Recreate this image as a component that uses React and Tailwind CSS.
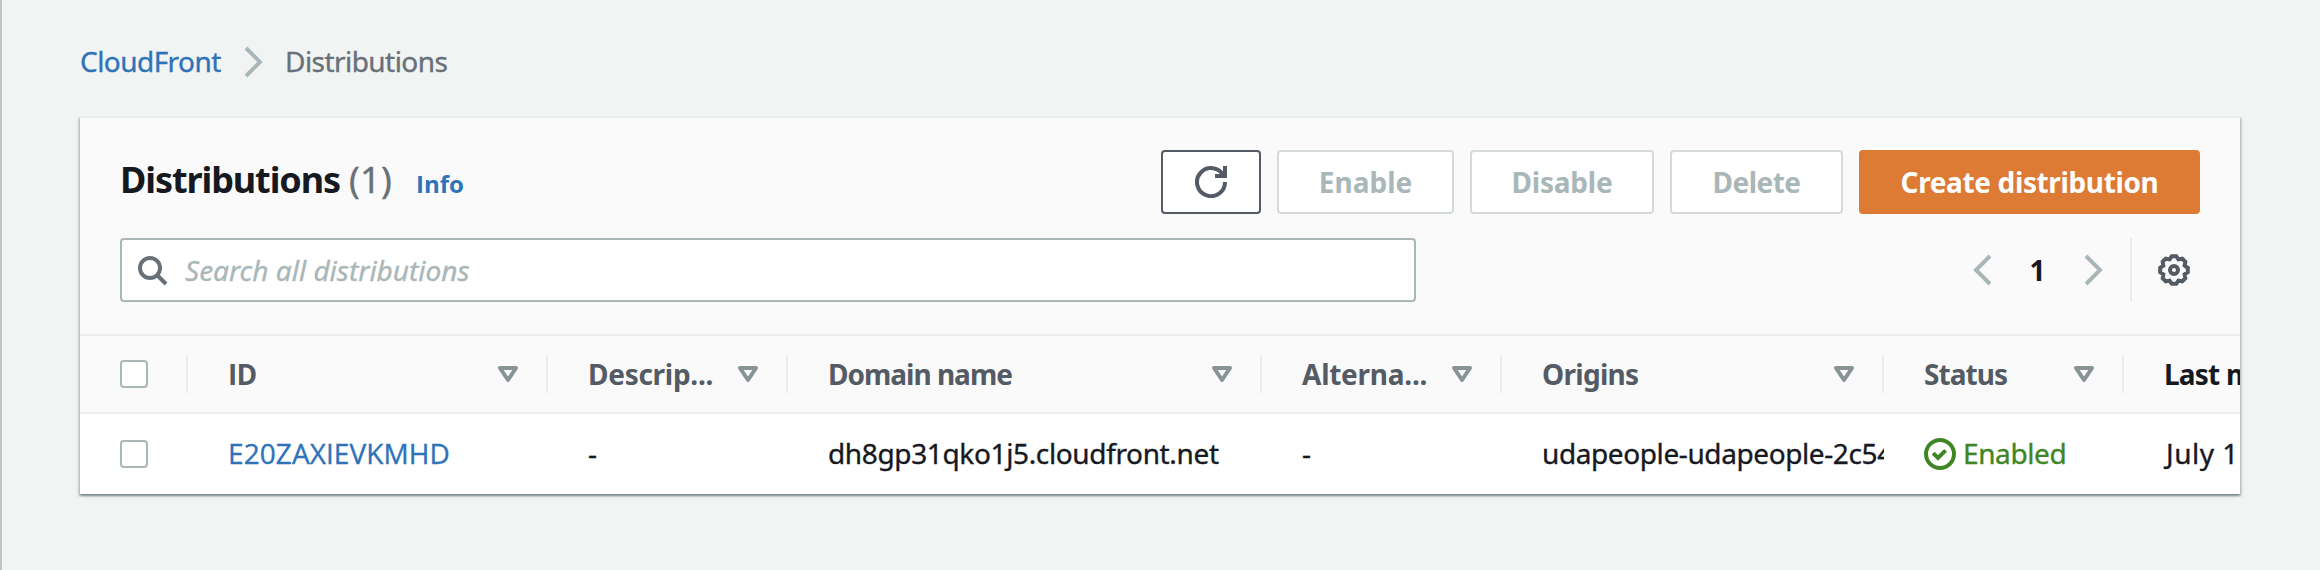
import React from 'react';

function Icon({ className = '', children }) {
  return (
    <svg viewBox="0 0 16 16" fill="none" stroke="currentColor" strokeWidth="2" className={`size-8 shrink-0 ${className}`}>
      {children}
    </svg>
  );
}

function gearPath() {
  const points = [];
  for (let i = 0; i < 8; i++) {
    const spots = [[-9, 7], [9, 7], [22.5, 5.75]];
    for (const [offset, r] of spots) {
      const a = ((i * 45 + offset - 90) * Math.PI) / 180;
      points.push(`${(8 + r * Math.cos(a)).toFixed(2)} ${(8 + r * Math.sin(a)).toFixed(2)}`);
    }
  }
  return `M${points.join('L')}Z`;
}

const ChevronRight = () => <Icon className="text-[#aab7b8]"><path d="m4 1 7 7-7 7" /></Icon>;
const ChevronLeft = () => <Icon className="text-[#aab7b8]"><path d="m11 1-7 7 7 7" /></Icon>;

function Button({ className, children }) {
  return (
    <button className={`flex h-16 items-center justify-center rounded border-2 border-[#d5dbdb] bg-white pb-px font-bold text-[#aab7b8] ${className}`}>
      {children}
    </button>
  );
}

function HeaderCell({ width, text, children }) {
  return (
    <div className={`flex h-[38px] shrink-0 items-center justify-between border-r-2 border-[#eaeded] pl-10 pr-[22px] font-bold text-[#545b64] ${width}`}>
      <span className={`pb-px whitespace-nowrap ${text}`}>{children}</span>
      <Icon className="text-[#879596]"><path d="M4 5h8l-4 6z" strokeLinejoin="round" /></Icon>
    </div>
  );
}

function Cell({ width, children }) {
  return <div className={`flex shrink-0 items-center overflow-hidden whitespace-nowrap pl-10 pb-[2px] [-webkit-text-stroke:0.35px] ${width}`}>{children}</div>;
}

const Checkbox = () => <span className="block h-7 w-7 rounded border-2 border-[#aab7b8] bg-white" />;

export default function App() {
  return (
    <div className="h-[570px] w-[2320px] overflow-hidden border-l-2 border-[#bfc4c8] bg-[#f2f3f3] pl-[78px] pt-10 font-['Noto_Sans',sans-serif] text-[28px] leading-[44px] text-[#16191f]">
      <nav className="flex h-11 items-center [-webkit-text-stroke:0.35px]">
        <a className="w-[158px] pb-[2px] tracking-[-0.55px] text-[#2e73b8]">CloudFront</a>
        <ChevronRight />
        <span className="pb-[2px] pl-[15px] tracking-[-0.55px] text-[#687078]">Distributions</span>
      </nav>

      <main className="mt-8 w-[2160px] border-t-2 border-[#eaeded] bg-white shadow-[0_2px_2px_0_rgba(0,28,36,0.3),2px_2px_2px_0_rgba(0,28,36,0.15),-2px_2px_2px_0_rgba(0,28,36,0.15)]">
        <header className="flex h-[216px] flex-col gap-6 bg-[#fafafa] px-10 pt-8">
          <div className="flex h-16 items-center justify-between">
            <h1 className="flex items-baseline pb-[4px] text-[36px]">
              <span className="w-[229px] font-bold tracking-[-1.09px]">Distributions</span>
              <span className="w-[67px] tracking-[0.3px] text-[#687078] [-webkit-text-stroke:0.35px]">(1)</span>
              <a className="font-['Open_Sans',sans-serif] text-2xl font-bold text-[#2e73b8]">Info</a>
            </h1>
            <div className="flex gap-4">
              <Button className="w-[100px] border-[#545b64]! pb-0! text-[#545b64]!">
                <Icon>
                  <path d="M10 5h5V0" />
                  <path d="M15 8a7 7 0 1 1-.7-3" />
                </Icon>
              </Button>
              <Button className="w-[177px]">Enable</Button>
              <Button className="w-[184px] tracking-[-0.2px]">Disable</Button>
              <Button className="w-[173px] tracking-[-0.5px]">Delete</Button>
              <Button className="w-[341px] border-[#dd7a33]! bg-[#dd7a33]! tracking-[-0.37px] text-white!">Create distribution</Button>
            </div>
          </div>
          <div className="flex h-16 items-center justify-between">
            <div className="flex h-16 w-[1296px] items-center rounded border-2 border-[#aab7b8] bg-white pl-[14px]">
              <Icon className="text-[#687078]">
                <circle cx="7" cy="7" r="5" />
                <path d="m15 15-4.5-4.5" />
              </Icon>
              <span className="pl-[17px] italic text-[#aab7b8] [-webkit-text-stroke:0.35px]">Search all distributions</span>
            </div>
            <div className="flex h-16 items-center">
              <ChevronLeft />
              <span className="w-[78px] pb-px pr-[3px] text-center font-bold">1</span>
              <ChevronRight />
              <span className="ml-5 h-16 w-[2px] bg-[#eaeded]" />
              <Icon className="ml-[26px] mr-[10px] text-[#545b64]">
                <path d={gearPath()} />
                <circle cx="8" cy="8" r="2" />
              </Icon>
            </div>
          </div>
        </header>

        <section className="overflow-hidden">
          <div className="flex h-20 items-center overflow-hidden border-y-2 border-[#eaeded] bg-[#fafafa]">
            <div className="flex h-[38px] w-[108px] shrink-0 items-center border-r-2 border-[#eaeded] pl-10">
              <Checkbox />
            </div>
            <HeaderCell width="w-[360px]" text="font-['Open_Sans',sans-serif] tracking-[-0.8px]">ID</HeaderCell>
            <HeaderCell width="w-[240px]" text="tracking-[-0.28px]">Descrip...</HeaderCell>
            <HeaderCell width="w-[474px]" text="tracking-[-1px]">Domain name</HeaderCell>
            <HeaderCell width="w-[240px]" text="tracking-[-0.25px]">Alterna...</HeaderCell>
            <HeaderCell width="w-[382px]" text="tracking-[-0.7px]">Origins</HeaderCell>
            <HeaderCell width="w-[240px]" text="tracking-[-0.95px]">Status</HeaderCell>
            <div className="shrink-0 whitespace-nowrap pb-px pl-10 font-bold tracking-[-0.8px]">Last modified</div>
          </div>
          <div className="flex h-20 items-center overflow-hidden">
            <div className="w-[108px] shrink-0 pl-10"><Checkbox /></div>
            <Cell width="w-[360px]"><a className="font-['Open_Sans',sans-serif] tracking-[0.08px] text-[#2e73b8]">E20ZAXIEVKMHD</a></Cell>
            <Cell width="w-[240px]">-</Cell>
            <Cell width="w-[474px]"><span className="tracking-[-0.36px]">dh8gp31qko1j5.cloudfront.net</span></Cell>
            <Cell width="w-[240px]">-</Cell>
            <Cell width="w-[382px]"><span className="tracking-[-0.4px]">udapeople-udapeople-2c54</span></Cell>
            <Cell width="w-[240px]">
              <span className="flex items-center gap-[7px] tracking-[-0.4px] text-[#3f8624]">
                <Icon className="mt-[2px]">
                  <circle cx="8" cy="8" r="7" />
                  <path d="M4.6 7.6 7 10l3.8-3.8" />
                </Icon>
                Enabled
              </span>
            </Cell>
            <Cell width="w-[240px]"><span className="pl-[2px] tracking-[0.5px]">July 1</span></Cell>
          </div>
        </section>
      </main>
    </div>
  );
}
